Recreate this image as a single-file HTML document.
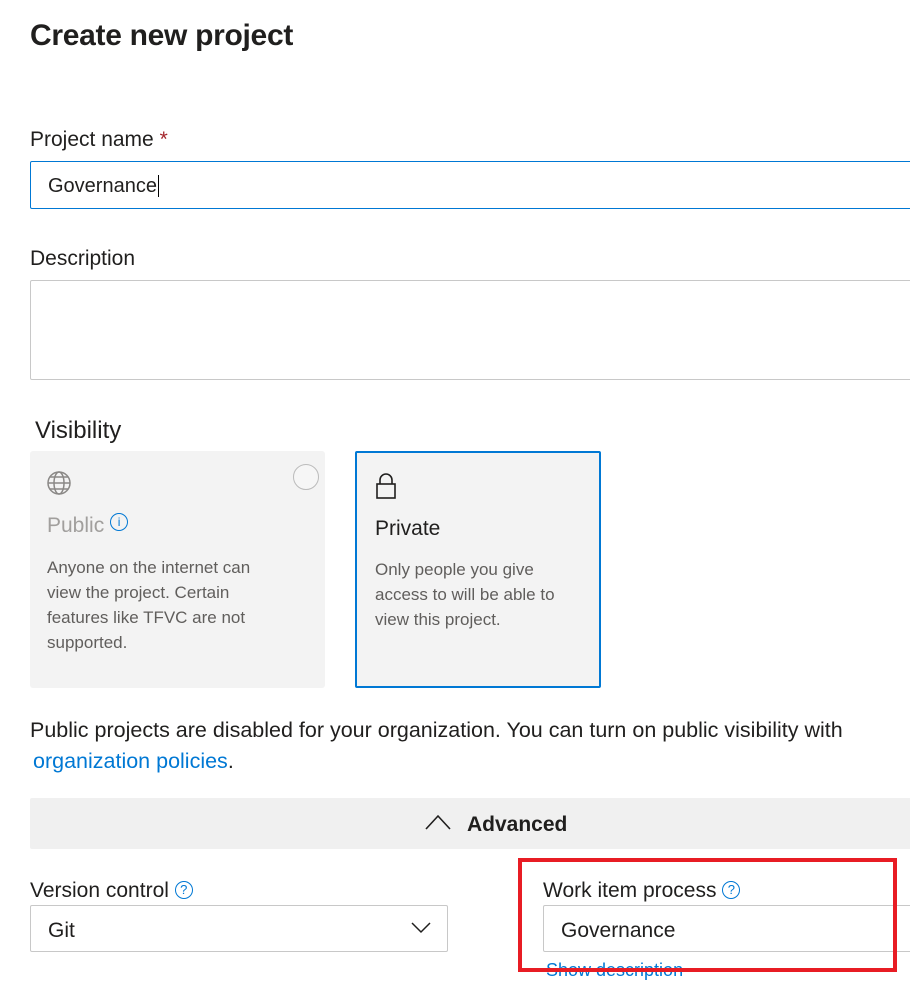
<!DOCTYPE html>
<html><head><meta charset="utf-8"><style>
body{margin:0;width:910px;height:1000px;background:#fff;font-family:"Liberation Sans",sans-serif;color:#201f1e;position:relative;overflow:hidden}
.a{position:absolute;white-space:nowrap}
.lbl{font-size:21px}
.inp{position:absolute;border:1px solid #c8c8c8;border-radius:2px;background:#fff;box-sizing:border-box}
.card{position:absolute;background:#f3f3f3;border-radius:3px;box-sizing:border-box}
.ct{font-size:17px;line-height:25px;color:#605e5c;white-space:normal}
.q{display:inline-block;width:18px;height:18px;border:1.5px solid #0078d4;border-radius:50%;color:#0078d4;font-size:13px;text-align:center;line-height:16px;box-sizing:border-box;vertical-align:3px}
</style></head><body>
<div class="a" style="left:30px;top:19px;font-size:30px;font-weight:bold;letter-spacing:-0.3px">Create new project</div>
<div class="a lbl" style="left:30px;top:128px">Project name <span style="color:#a4262c">*</span></div>
<div class="inp" style="left:30px;top:161px;width:900px;height:48px;border:1.5px solid #0078d4"></div>
<div class="a" style="left:48px;top:175px;font-size:20px">Governance<span style="border-left:1.5px solid #000;margin-left:1px"></span></div>
<div class="a lbl" style="left:30px;top:247px">Description</div>
<div class="inp" style="left:30px;top:280px;width:900px;height:100px"></div>
<div class="a" style="left:35px;top:417px;font-size:24px">Visibility</div>
<div class="card" style="left:30px;top:451px;width:295px;height:237px">
 <svg style="position:absolute;left:16px;top:19px" width="26" height="26" viewBox="0 0 26 26" fill="none" stroke="#8a8886" stroke-width="1.5"><circle cx="13" cy="13" r="11"/><ellipse cx="13" cy="13" rx="5" ry="11"/><path d="M2 13h22M4 7h18M4 19h18"/></svg>
 <div style="position:absolute;right:6px;top:13px;width:24px;height:24px;border:1px solid #bbb;border-radius:50%;background:#f6f6f6"></div>
 <div class="a" style="left:17px;top:62px;font-size:21px;color:#a19f9d">Public <span class="q" style="font-size:12px;vertical-align:6px">i</span></div>
 <div class="a ct" style="left:17px;top:104px;width:235px">Anyone on the internet can view the project. Certain features like TFVC are not supported.</div>
</div>
<div class="card" style="left:355px;top:451px;width:246px;height:237px;border:2.5px solid #0078d4;border-radius:2px">
 <svg style="position:absolute;left:18px;top:19px" width="22" height="28" viewBox="0 0 22 28" fill="none" stroke="#201f1e" stroke-width="1.6"><path d="M5 12V8a6 6 0 0 1 12 0v4"/><rect x="2" y="12" width="18" height="14"/></svg>
 <div class="a" style="left:18px;top:64px;font-size:21px">Private</div>
 <div class="a ct" style="left:18px;top:104px;width:205px">Only people you give access to will be able to view this project.</div>
</div>
<div class="a" style="left:30px;top:715px;font-size:21.5px;line-height:31px;white-space:normal;width:875px">Public projects are disabled for your organization. You can turn on public visibility with <span style="color:#0078d4;margin-left:3px">organization policies</span>.</div>
<div style="position:absolute;left:30px;top:798px;width:900px;height:51px;background:#f0f0f0;border-radius:2px"></div>
<svg class="a" style="left:424px;top:813px" width="28" height="18" viewBox="0 0 28 18" fill="none" stroke="#201f1e" stroke-width="1.6"><path d="M2 16L14 3l12 13"/></svg>
<div class="a" style="left:467px;top:813px;font-size:21px;font-weight:bold">Advanced</div>
<div class="a lbl" style="left:30px;top:879px">Version control <span class="q">?</span></div>
<div class="inp" style="left:30px;top:905px;width:418px;height:47px"></div>
<div class="a" style="left:48px;top:919px;font-size:21px">Git</div>
<svg class="a" style="left:411px;top:922px" width="20" height="12" viewBox="0 0 20 12" fill="none" stroke="#201f1e" stroke-width="1.5"><path d="M1 1l9 9 9-9"/></svg>
<div class="a lbl" style="left:543px;top:879px">Work item process <span class="q">?</span></div>
<div class="inp" style="left:543px;top:905px;width:400px;height:47px"></div>
<div class="a" style="left:561px;top:919px;font-size:21px">Governance</div>
<div class="a" style="left:546px;top:960px;font-size:18px;color:#0078d4">Show description</div>
<div style="position:absolute;left:518px;top:858px;width:379px;height:114px;border:4px solid #e81c24;box-sizing:border-box"></div>
</body></html>
